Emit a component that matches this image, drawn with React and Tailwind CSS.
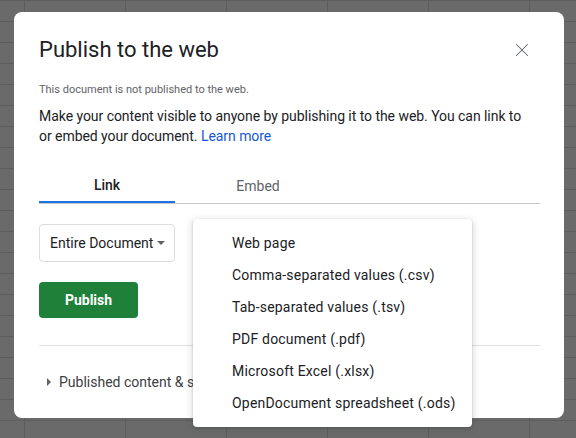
import { X } from "lucide-react";

const formats = [
  "Web page",
  "Comma-separated values (.csv)",
  "Tab-separated values (.tsv)",
  "PDF document (.pdf)",
  "Microsoft Excel (.xlsx)",
  "OpenDocument spreadsheet (.ods)",
];

const App = () => {
  return (
    <div
      className="h-[438px] w-full overflow-hidden bg-[#6a6a6a] bg-[linear-gradient(to_right,#5d5d5d_1px,transparent_1px),linear-gradient(to_bottom,#5d5d5d_1px,transparent_1px)] bg-size-[101px_21px] bg-position-[24px_0px] pt-[12px] pl-[14px]"
      style={{ fontFamily: "Roboto, 'Liberation Sans', Arial, sans-serif" }}
    >
      <div className="relative w-[550px] h-[406px] rounded-[8px] bg-white pt-[24px] pl-[25px] pr-[24px]">
        {/* Header */}
        <div className="flex items-center justify-between h-[28px]">
          <h1 className="text-[22px] leading-[28px] text-[#202124] font-normal">Publish to the web</h1>
          <button className="mr-[7px] text-[#5f6368]">
            <X className="h-[22px] w-[22px]" strokeWidth={1.1} />
          </button>
        </div>

        <p className="mt-[18px] text-[11px] leading-[16px] text-[#5f6368]">
          This document is not published to the web.
        </p>
        <p className="mt-[8px] w-[492px] text-[14px] leading-[20px] tracking-[-0.05px] text-[#202124]">
          Make your content visible to anyone by publishing it to the web. You can link to or embed your
          document. <span className="text-[#1558d6]">Learn more</span>
        </p>

        {/* Tabs */}
        <div className="mt-[23px] flex w-[501px] border-b border-[#c6c6c6]">
          <div className="w-[136px] h-[34px] flex items-center justify-center text-[14px] font-medium text-[#202124] border-b-2 border-[#1a73e8] -mb-px">
            Link
          </div>
          <div className="w-[166px] h-[34px] flex items-center justify-center text-[14px] text-[#5f6368]">
            Embed
          </div>
        </div>

        {/* Range select */}
        <div className="mt-[20px] w-[136px] h-[38px] rounded-[4px] border border-[#dadce0] flex items-center pl-[10px] pr-[9px] justify-between">
          <span className="text-[14px] text-[#202124]">Entire Document</span>
          <span className="w-0 h-0 border-l-[4px] border-r-[4px] border-t-[4px] border-l-transparent border-r-transparent border-t-[#5f6368]" />
        </div>

        <button className="mt-[20px] w-[99px] h-[36px] rounded-[4px] bg-[#1e8039] text-white text-[14px] font-bold">
          Publish
        </button>

        <div className="mt-[27px] w-[501px] border-t border-[#e0e0e0]" />

        <div className="mt-[26px] flex items-center h-[20px] pl-[8px] gap-[8px]">
          <span className="w-0 h-0 border-t-[4px] border-b-[4px] border-l-[4px] border-t-transparent border-b-transparent border-l-[#5f6368]" />
          <span className="text-[14px] text-[#3c4043]">Published content &amp; settings</span>
        </div>

        {/* Format menu */}
        <div className="absolute left-[179px] top-[207px] w-[279px] rounded-[4px] bg-white py-[8px] shadow-[0_2px_6px_2px_rgba(60,64,67,0.15),0_1px_2px_rgba(60,64,67,0.3)]">
          {formats.map((f) => (
            <div key={f} className="h-[32px] flex items-center pl-[39px] text-[14px] tracking-[0.2px] text-[#202124]">
              {f}
            </div>
          ))}
        </div>
      </div>
    </div>
  );
};

export default App;
